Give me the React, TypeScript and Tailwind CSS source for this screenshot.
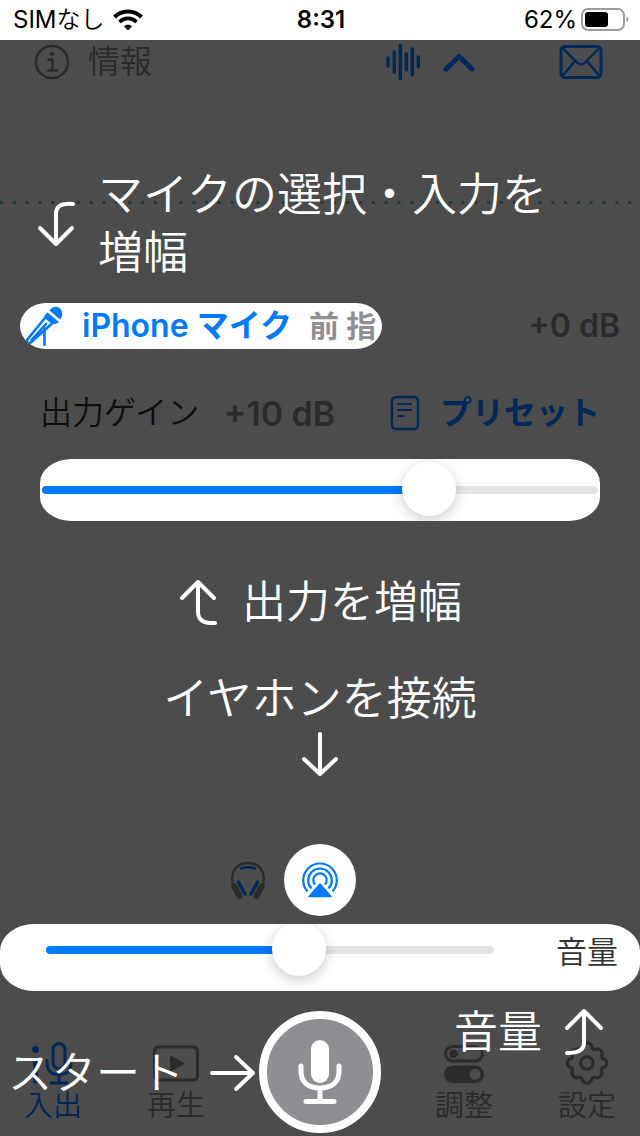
import { useState } from 'react';
import type { CSSProperties, ReactNode } from 'react';

interface StrokeIconProps {
  className?: string;
  children: ReactNode;
  viewBox: string;
  strokeWidth?: number;
}

function StrokeIcon({ className, children, viewBox, strokeWidth = 3 }: StrokeIconProps) {
  return (
    <svg
      className={className}
      viewBox={viewBox}
      fill="none"
      stroke="currentColor"
      strokeWidth={strokeWidth}
      strokeLinecap="round"
      strokeLinejoin="round"
      aria-hidden="true"
    >
      {children}
    </svg>
  );
}

interface SliderProps {
  id: string;
  label: string;
  value: number;
  onChange: (value: number) => void;
}

function Slider({ id, label, value, onChange }: SliderProps) {
  return (
    <input
      id={id}
      type="range"
      min={0}
      max={100}
      step={0.1}
      value={value}
      aria-label={label}
      onChange={(e) => onChange(Number(e.target.value))}
      style={{ '--fill': `${value}%` } as CSSProperties}
      className="block h-full w-full min-w-0 cursor-pointer appearance-none bg-transparent outline-none [&::-webkit-slider-runnable-track]:h-2 [&::-webkit-slider-runnable-track]:rounded-full [&::-webkit-slider-runnable-track]:bg-[linear-gradient(to_right,#007aff_var(--fill),#e4e4e4_var(--fill))] [&::-webkit-slider-thumb]:-mt-6 [&::-webkit-slider-thumb]:size-[54px] [&::-webkit-slider-thumb]:appearance-none [&::-webkit-slider-thumb]:rounded-full [&::-webkit-slider-thumb]:bg-white [&::-webkit-slider-thumb]:shadow-[0_4px_14px_rgba(0,0,0,0.2)]"
    />
  );
}

function StatusBar() {
  return (
    <div className="grid h-10 grid-cols-[1fr_auto_1fr] items-center bg-white pr-[11px] pl-[13px] text-2xl text-black">
      <div className="flex items-center gap-2">
        <span>
          SIM<span className="font-[350]">なし</span>
        </span>
        <svg className="h-[22px] w-[30px]" viewBox="0 0 30 22" fill="none" stroke="currentColor" aria-hidden="true">
          <path d="M1.500 8C9 .6 21 .6 28.500 8" strokeWidth="4" />
          <path d="M6.500 13C11.500 8.200 18.500 8.200 23.500 13" strokeWidth="3.800" />
          <path d="M15 21.500l-4-4.200c2.200-2 5.800-2 8 0z" fill="currentColor" stroke="none" />
        </svg>
      </div>
      <span className="font-semibold">8:31</span>
      <div className="flex items-center justify-end gap-1">
        <span>62%</span>
        <svg className="h-6 w-12" viewBox="0 0 48 24" aria-hidden="true">
          <rect x="1" y="1" width="42" height="21" rx="6" fill="none" stroke="#9b9b9b" strokeWidth="2" />
          <rect x="4" y="4" width="23" height="15" rx="3" fill="#000" />
          <path d="M45.500 8.500c2.400.8 2.400 5.200 0 6z" fill="#9b9b9b" />
        </svg>
      </div>
    </div>
  );
}

function TopBar() {
  return (
    <header className="flex h-11 items-center pr-[37px] pl-[34px]">
      <button type="button" className="flex items-center gap-[18px] text-[32px] font-[350] text-[#2b2b2b]">
        <StrokeIcon className="size-9" viewBox="0 0 36 36" strokeWidth={2.4}>
          <circle cx="18" cy="18" r="16" />
          <path d="M14.500 15.500H18.500V26M14 26.500h9" />
          <circle cx="18" cy="10" r="1.500" fill="currentColor" strokeWidth="1" />
        </StrokeIcon>
        情報
      </button>
      <div className="ml-auto flex items-center text-[#00285a]">
        <button type="button" aria-label="波形" className="mr-[21px]">
          <StrokeIcon className="h-9 w-9" viewBox="0 0 36 36" strokeWidth={3.4}>
            <path d="M2 14v8M8.300 8v20M14.300 1.500v33M20.300 10v16M26.300 5v26M32.300 13v10" />
          </StrokeIcon>
        </button>
        <button type="button" aria-label="閉じる" className="mr-[84px]">
          <StrokeIcon className="h-5 w-8" viewBox="0 0 32 20" strokeWidth={5}>
            <path d="M3 17L16 4.500 29 17" />
          </StrokeIcon>
        </button>
        <button type="button" aria-label="メール">
          <StrokeIcon className="h-9 w-11" viewBox="0 0 44 36">
            <rect x="2" y="2.500" width="40" height="31" rx="4" />
            <path d="M3.500 4l14.500 14.500q4 4 8 0L40.500 4M3.500 32L16 17M40.500 32L28 17" strokeWidth="2.400" />
          </StrokeIcon>
        </button>
      </div>
    </header>
  );
}

function StandMicIcon() {
  return (
    <svg className="h-10 w-10 shrink-0" viewBox="0 0 40 40" aria-hidden="true">
      <g fill="#007aff">
        <path d="M25.500 4.500C28-.5 35-.8 37.500 4.500c1.500 3.500.6 6.800-1.500 9z" />
        <path d="M23.500 6.500l11.500 9.500c-2 2-4.500 2.300-7.500 1.800l-7.500-6.300c.2-2 1.500-3.800 3.500-5z" />
        <path d="M1 39.500l2.500-4 4 2-2.500 2z" />
      </g>
      <path
        d="M20.500 12.500L3 34q-.5 3 2.500 3.500L27.500 18M7.500 34L22 18M20.500 22v17"
        fill="none"
        stroke="#007aff"
        strokeWidth="2.600"
        strokeLinecap="round"
      />
    </svg>
  );
}

function HeadphonesIcon() {
  return (
    <svg className="h-10 w-9" viewBox="0 0 36 40" fill="none" strokeLinecap="round" aria-hidden="true">
      <path d="M3 25C0 12 6 3 18 3s18 9 15 22" stroke="#2b2b2b" strokeWidth="2.400" />
      <path d="M4.500 26.500l5 9.500M31.500 26.500l-5 9.500" stroke="#2b2b2b" strokeWidth="6" />
      <path d="M8.500 22l6.500 12M27.500 22l-6.500 12" stroke="#00285a" strokeWidth="3.400" />
      <path d="M11 8.500q7-2.500 14 0" stroke="#00285a" strokeWidth="2.400" />
    </svg>
  );
}

function AirPlayIcon() {
  return (
    <svg className="h-9 w-9" viewBox="0 0 36 36" fill="none" stroke="#007aff" strokeWidth="2.200" aria-hidden="true">
      <path d="M5.500 29.500A16.800 16.800 0 1 1 30.500 29.500" />
      <path d="M9.500 26.500A11.800 11.800 0 1 1 26.500 26.500" />
      <path d="M13 22.500A6.700 6.700 0 1 1 23 22.500" />
      <path d="M18 22L29 34.500H7z" fill="#007aff" strokeWidth="1.500" strokeLinejoin="round" />
    </svg>
  );
}

interface TabProps {
  label: string;
  active?: boolean;
  children: ReactNode;
}

function Tab({ label, active = false, children }: TabProps) {
  return (
    <button
      type="button"
      className={`flex w-[58px] flex-col items-center text-[29px] leading-[42px] font-[350] ${active ? 'text-[#00285a]' : 'text-[#2b2b2b]'}`}
    >
      {children}
      <span className="whitespace-nowrap">{label}</span>
    </button>
  );
}

function TabBar() {
  return (
    <nav className="relative flex h-[145px] items-start justify-between px-6 pt-5">
      <div className="flex gap-[65px] pt-[30px]">
        <Tab label="入出" active>
          <StrokeIcon className="h-11 w-11" viewBox="0 0 44 44">
            <rect x="22" y="2.500" width="12" height="25" rx="6" />
            <path d="M16 19.500v3c0 7 4.500 11 12 11s12-4 12-11v-3M28 34v8M20 42h16" />
            <circle cx="4.500" cy="8.500" r="2.500" fill="currentColor" strokeWidth="2" />
            <path d="M4.500 19v21" strokeWidth="5" />
          </StrokeIcon>
        </Tab>
        <Tab label="再生">
          <StrokeIcon className="h-11 w-12" viewBox="0 0 48 44" strokeWidth={3}>
            <rect x="2.500" y="6" width="43" height="33" rx="4" />
            <path d="M19 16v13l12-6.500z" fill="currentColor" strokeWidth="2" />
          </StrokeIcon>
        </Tab>
      </div>

      <button
        type="button"
        aria-label="スタート"
        className="flex size-[122px] items-center justify-center rounded-full border-8 border-white bg-[#8e8e93] text-white"
      >
        <StrokeIcon className="h-16 w-11" viewBox="0 0 44 64" strokeWidth={5}>
          <rect x="13" y="0" width="18" height="43" rx="9" fill="currentColor" stroke="none" />
          <path d="M3 26v5c0 11 7 17 19 17s19-6 19-17v-5M22 49v11M8 61.500h28" />
        </StrokeIcon>
      </button>

      <div className="flex gap-[65px] pt-[30px]">
        <Tab label="調整">
          <StrokeIcon className="h-11 w-11" viewBox="0 0 44 44" strokeWidth={3}>
            <rect x="3.500" y="5.500" width="37" height="14.500" rx="7.250" />
            <circle cx="11.500" cy="12.800" r="3.800" fill="currentColor" strokeWidth="1" />
            <rect x="3.500" y="26" width="37" height="14.500" rx="7.250" fill="currentColor" />
            <circle cx="33" cy="33.300" r="5.500" fill="#4c4c4c" stroke="none" />
          </StrokeIcon>
        </Tab>
        <Tab label="設定">
          <StrokeIcon className="h-11 w-11" viewBox="1.5 2 21 21" strokeWidth={1.5}>
            <path d="M9.700 4.800a2.340 2.340 0 0 1 4.600 0a2.340 2.340 0 0 0 .5 1.100l.9.200a2.340 2.340 0 0 1 3.200 3.200l.3 1a2.340 2.340 0 0 0 1.200.3a2.340 2.340 0 0 1 0 3.900a2.340 2.340 0 0 0-1.300.5l-.3 1a2.340 2.340 0 0 1-3.200 3.200l-1 .4a2.340 2.340 0 0 0-.4 1a2.340 2.340 0 0 1-4.400 0a2.340 2.340 0 0 0-.4-1l-1-.4a2.340 2.340 0 0 1-3.200-3.200l-.3-1a2.340 2.340 0 0 0-1.300-.5a2.340 2.340 0 0 1 0-3.900a2.340 2.340 0 0 0 1.200-.3l.3-1a2.340 2.340 0 0 1 3.200-3.200l.9-.2a2.340 2.340 0 0 0 .5-1.100z" />
            <circle cx="12" cy="12.500" r="3" />
          </StrokeIcon>
        </Tab>
      </div>

      {/* Guide labels floating over the tabs */}
      <div className="pointer-events-none absolute top-[53px] left-2 flex items-center gap-6 text-[44px] leading-[58px] font-[350] text-white">
        スタート
        <StrokeIcon className="h-10 w-12" viewBox="0 0 48 40" strokeWidth={4}>
          <path d="M4 20h41M28 4l17 16-17 16" />
        </StrokeIcon>
      </div>
      <div className="pointer-events-none absolute top-3 right-9 flex items-center gap-[22px] text-[44px] leading-[58px] font-[350] text-white">
        音量
        <StrokeIcon className="h-12 w-10" viewBox="0 0 40 48" strokeWidth={4}>
          <path d="M3 20L20 3l17 17M20 3v32q0 10-17 10" />
        </StrokeIcon>
      </div>
    </nav>
  );
}

export default function App() {
  const [gain, setGain] = useState(71.7);
  const [volume, setVolume] = useState(57.4);

  return (
    <div className="min-h-screen overflow-hidden bg-[#4c4c4c] font-[Inter,'Noto_Sans_CJK_JP',sans-serif]">
      <StatusBar />
      <TopBar />

      <main>
        {/* Microphone selection guide */}
        <section className="relative flex gap-[22px] pt-[82px] pr-16 pl-9 text-white">
          <svg className="absolute top-[117px] left-0 h-[3px] w-full" aria-hidden="true">
            <line x1="0" y1="1.500" x2="100%" y2="1.500" stroke="#213a35" strokeWidth="3" strokeDasharray="3 9.820" />
          </svg>
          <StrokeIcon className="relative mt-[34px] h-12 w-10 shrink-0" viewBox="0 0 40 48" strokeWidth={4}>
            <path d="M37 4Q20 2 20 14v30M4 28l16 16 16-16" />
          </StrokeIcon>
          <p className="relative text-[45px] leading-[58px] font-[350]">マイクの選択・入力を増幅</p>
        </section>

        <div className="mt-[21px] flex h-[46px] items-center justify-between px-5">
          <button
            type="button"
            className="flex h-[46px] w-[362px] items-center overflow-hidden rounded-[26px/23px] bg-white pl-1 text-left text-[32px] whitespace-nowrap"
          >
            <StandMicIcon />
            <span className="ml-[18px] font-semibold text-[#007aff]">
              iPhone <span className="font-bold">マイク</span>
            </span>
            <span className="ml-[17px] text-[30px] font-bold text-[#8e8e93]">前 指</span>
          </button>
          <span className="text-[32px] font-semibold text-[#2b2b2c]">+0 dB</span>
        </div>

        <div className="mt-[42px] flex h-11 items-center px-10 text-[32px] whitespace-nowrap">
          <label htmlFor="gain" className="font-[350] text-[#0f0f0f]">
            出力ゲイン
          </label>
          <span className="ml-6 text-[34px] font-semibold text-[#2b2b2c]">+10 dB</span>
          <button type="button" className="ml-auto flex items-center gap-5 font-bold text-[#00285a]">
            <StrokeIcon className="h-9 w-[30px]" viewBox="0 0 30 36" strokeWidth={2.4}>
              <rect x="2" y="2" width="26" height="32" rx="4" />
              <path d="M8 9h13M8 15h13M8 21h6" strokeWidth="2" />
            </StrokeIcon>
            プリセット
          </button>
        </div>

        <div className="mx-10 mt-6 h-[62px] overflow-hidden rounded-[32px/24px] bg-white px-0.5">
          <Slider id="gain" label="出力ゲイン" value={gain} onChange={setGain} />
        </div>

        <p className="mt-[52px] flex items-center justify-center gap-6 text-[44px] leading-[58px] font-[350] text-white">
          <StrokeIcon className="h-12 w-10" viewBox="0 0 40 48" strokeWidth={4}>
            <path d="M4 20L20 4l16 16M20 4v30q0 12 17 11" />
          </StrokeIcon>
          出力を増幅
        </p>

        <div className="mt-[39px] flex flex-col items-center text-[45px] leading-[58px] font-[350] text-white">
          <p>イヤホンを接続</p>
          <StrokeIcon className="mt-0.5 h-12 w-10" viewBox="0 0 40 48" strokeWidth={4}>
            <path d="M20 4v40M4 29l16 15 16-15" />
          </StrokeIcon>
        </div>

        <div className="mt-[66px] grid grid-cols-[1fr_auto_1fr] items-center">
          <div className="mr-[18px] justify-self-end">
            <HeadphonesIcon />
          </div>
          <button
            type="button"
            aria-label="イヤホンを接続"
            className="flex size-[72px] items-center justify-center rounded-full bg-white"
          >
            <AirPlayIcon />
          </button>
        </div>

        <div className="mt-2 flex h-[67px] items-start gap-[62px] overflow-hidden rounded-[34px/27px] bg-white pr-[22px] pl-[46px]">
          <div className="h-[52px] min-w-0 flex-1">
            <Slider id="volume" label="音量" value={volume} onChange={setVolume} />
          </div>
          <label htmlFor="volume" className="text-[31px] leading-[56px] font-[350] whitespace-nowrap text-[#333]">
            音量
          </label>
        </div>
      </main>

      <TabBar />
    </div>
  );
}
